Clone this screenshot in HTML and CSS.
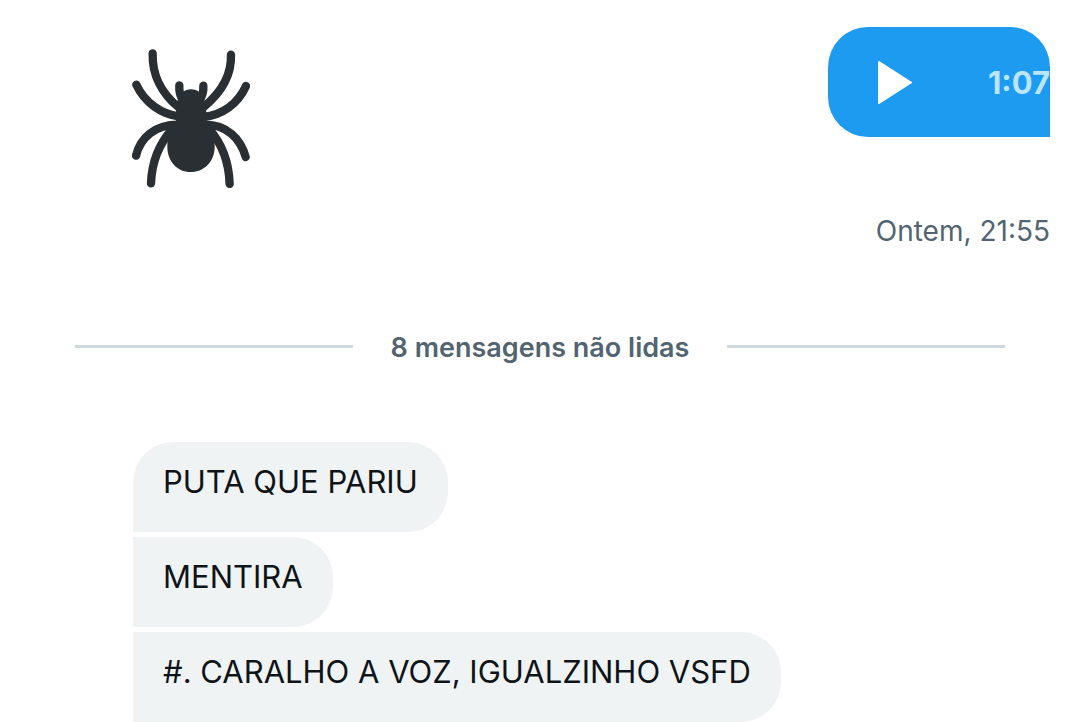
FILE: index.html
```
<!DOCTYPE html>
<html lang="pt-BR">
<head>
  <meta charset="UTF-8" />
  <meta name="viewport" content="width=device-width, initial-scale=1" />
  <title>Mensagens</title>
  <link rel="stylesheet" href="styles.css">
</head>
<body>

  <main class="chat">
    <div class="top">
      <!-- Emoji recebido -->
      <svg class="spider" viewBox="66 57 354 417" role="img" aria-label="Aranha">
        <g fill="none" stroke="#292f33" stroke-width="25" stroke-linecap="round">
          <path d="M128 70C126 135 156 192 206 232" />
          <path d="M363 74C365 136 332 189 282 230" />
          <path d="M79 164C104 217 152 252 210 260" />
          <path d="M408 168C384 221 338 255 280 261" />
          <path d="M78 377C91 324 134 284 204 284" />
          <path d="M407 381C392 327 352 284 284 284" />
          <path d="M123 460C125 403 146 344 186 298" />
          <path d="M359 462C357 404 338 344 298 298" />
          <path d="M208 166C207 183 209 195 217 208" />
          <path d="M280 167C281 184 278 196 270 208" />
        </g>
        <path fill="#292f33" d="M243 178C263 178 276 190 282 206C289 224 290 249 288 270C305 289 314 320 314 350C314 393 284 426 242 426C201 426 172 393 172 350C172 320 182 289 199 270C197 249 198 224 205 206C211 190 224 178 243 178Z" />
      </svg>

      <!-- Audio enviado -->
      <div class="sent">
        <button class="audio" type="button" aria-label="Reproduzir">
          <svg class="play" viewBox="0 0 34 43" aria-hidden="true">
            <path d="M1 1L33 21.5L1 42Z" fill="#fff" stroke="#fff" stroke-width="2" stroke-linejoin="round" />
          </svg>
          <span class="duration">1:07</span>
        </button>
        <time class="time">Ontem, 21:55</time>
      </div>
    </div>

    <div class="unread">8 mensagens não lidas</div>

    <div class="received">
      <div class="bubble first">PUTA QUE PARIU</div>
      <div class="bubble">MENTIRA</div>
      <div class="bubble">#. CARALHO A VOZ, IGUALZINHO VSFD</div>
    </div>
  </main>

</body>
</html>
```
FILE: styles.css
```
body {
  margin: 0;
  background: #fff;
  color: #0f1419;
  font-family: Inter, "Liberation Sans", sans-serif;
}

.chat {
  padding-top: 27px;
}

.top {
  display: flex;
  justify-content: space-between;
  align-items: flex-start;
  padding: 0 30px 0 132px;
}

.spider {
  width: 118px;
  height: 139px;
  margin-top: 22px;
}

/* Audio enviado */
.sent {
  display: flex;
  flex-direction: column;
  align-items: flex-end;
}

.audio {
  display: flex;
  align-items: center;
  justify-content: space-between;
  width: 222px;
  height: 110px;
  padding: 0 0 0 50px;
  border: none;
  border-radius: 40px 40px 0 40px;
  background: #1d9bf0;
  cursor: pointer;
}

.play {
  width: 34px;
  height: 43px;
}

.duration {
  color: #bbe4fd;
  font-family: Inter, "Liberation Sans", sans-serif;
  font-size: 31px;
  font-weight: 700;
}

.time {
  margin-top: 74px;
  color: #536471;
  font-size: 28px;
  line-height: 40px;
}

/* Linha de mensagens nao lidas */
.unread {
  display: flex;
  align-items: center;
  gap: 38px;
  margin: 77px 75px 0;
  color: #536471;
  font-size: 27px;
  font-weight: 600;
  line-height: 40px;
}

.unread::before,
.unread::after {
  content: "";
  flex: 1;
  height: 3px;
  margin-bottom: 4px;
  background: #cfd9de;
}

/* Mensagens recebidas */
.received {
  display: flex;
  flex-direction: column;
  align-items: flex-start;
  gap: 5px;
  margin-top: 74px;
  padding: 0 30px 0 133px;
}

.bubble {
  padding: 20px 30px 30px;
  border-radius: 0 40px 40px 0;
  background: #eff3f4;
  font-size: 31px;
  line-height: 40px;
}

.bubble.first {
  border-top-left-radius: 40px;
}
```
